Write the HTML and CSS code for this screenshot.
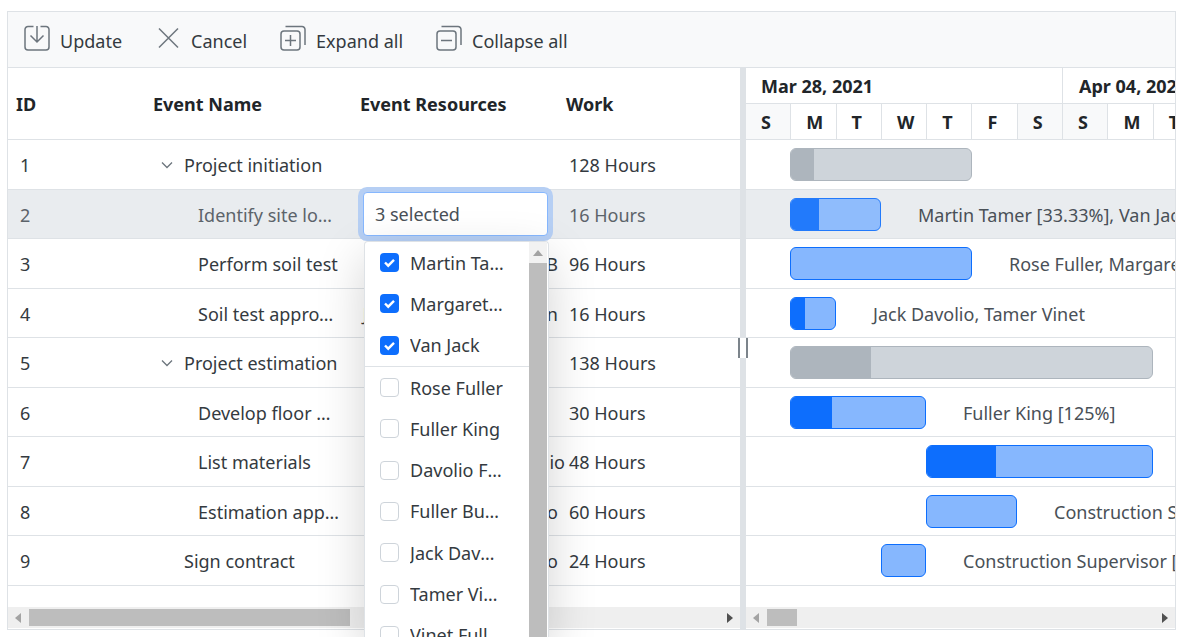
FILE: index.html
```html
<!DOCTYPE html>
<html lang="en">
<head>
  <meta charset="UTF-8" />
  <title>Gantt chart - resource editing</title>
  <link rel="stylesheet" href="styles.css">
</head>
<body>
  <div class="gantt">
    <div class="toolbar">
      <div class="tool">
        <svg class="tool-icon" viewBox="0 0 26 26"><path d="M9.500 1.500H4a3 3 0 0 0-3 3V22a3 3 0 0 0 3 3h18a3 3 0 0 0 3-3V4.500a3 3 0 0 0-3-3h-5.500M13 1v16M6.500 10.500 13 17l6.500-6.500"/></svg>
        <span>Update</span>
      </div>
      <div class="tool">
        <svg class="tool-icon" viewBox="0 0 26 26"><path d="M4 3.500 23 22.500M23 3.500 4 22.500"/></svg>
        <span>Cancel</span>
      </div>
      <div class="tool">
        <svg class="tool-icon" viewBox="0 0 26 26"><rect x="1" y="6" width="19" height="19" rx="3"/><path d="M5.500 1.500H22a3 3 0 0 1 3 3V20M10.500 10v11M5 15.500h11"/></svg>
        <span>Expand all</span>
      </div>
      <div class="tool">
        <svg class="tool-icon" viewBox="0 0 26 26"><rect x="1" y="6" width="19" height="19" rx="3"/><path d="M5.500 1.500H22a3 3 0 0 1 3 3V20M5 15.500h11"/></svg>
        <span>Collapse all</span>
      </div>
    </div>

    <div class="panes">
      <div class="grid">
        <div class="grid-row grid-head">
          <div class="cell">ID</div>
          <div class="cell">Event Name</div>
          <div class="cell">Event Resources</div>
          <div class="cell">Work</div>
        </div>

        <div class="grid-row">
          <div class="cell cell-id">1</div>
          <div class="cell cell-name level-0"><svg class="chevron" viewBox="0 0 14 14"><path d="M2 4.500 7 9.500l5-5"/></svg><span class="name-text">Project initiation</span></div>
          <div class="cell cell-res"></div>
          <div class="cell cell-work">128 Hours</div>
        </div>
        <div class="grid-row is-selected">
          <div class="cell cell-id">2</div>
          <div class="cell cell-name level-1"><span class="name-text">Identify site location</span></div>
          <div class="cell cell-edit"><div class="multi-input">3 selected</div></div>
          <div class="cell cell-work">16 Hours</div>
        </div>
        <div class="grid-row">
          <div class="cell cell-id">3</div>
          <div class="cell cell-name level-1"><span class="name-text">Perform soil test</span></div>
          <div class="cell cell-res">Rose Fuller, Fuller B</div>
          <div class="cell cell-work">96 Hours</div>
        </div>
        <div class="grid-row">
          <div class="cell cell-id">4</div>
          <div class="cell cell-name level-1"><span class="name-text">Soil test approval</span></div>
          <div class="cell cell-res">Jack Davolio, Tamer Vin</div>
          <div class="cell cell-work">16 Hours</div>
        </div>
        <div class="grid-row">
          <div class="cell cell-id">5</div>
          <div class="cell cell-name level-0"><svg class="chevron" viewBox="0 0 14 14"><path d="M2 4.500 7 9.500l5-5"/></svg><span class="name-text">Project estimation</span></div>
          <div class="cell cell-res"></div>
          <div class="cell cell-work">138 Hours</div>
        </div>
        <div class="grid-row">
          <div class="cell cell-id">6</div>
          <div class="cell cell-name level-1"><span class="name-text">Develop floor plan</span></div>
          <div class="cell cell-res"></div>
          <div class="cell cell-work">30 Hours</div>
        </div>
        <div class="grid-row">
          <div class="cell cell-id">7</div>
          <div class="cell cell-name level-1"><span class="name-text">List materials</span></div>
          <div class="cell cell-res res-cut">Fuller King, Davolio</div>
          <div class="cell cell-work">48 Hours</div>
        </div>
        <div class="grid-row">
          <div class="cell cell-id">8</div>
          <div class="cell cell-name level-1"><span class="name-text">Estimation approval</span></div>
          <div class="cell cell-res">Jack Davolio</div>
          <div class="cell cell-work">60 Hours</div>
        </div>
        <div class="grid-row">
          <div class="cell cell-id">9</div>
          <div class="cell cell-name level-0 no-chevron"><span class="name-text">Sign contract</span></div>
          <div class="cell cell-res">Jack Davolio</div>
          <div class="cell cell-work">24 Hours</div>
        </div>

        <div class="hscroll">
          <svg class="arrow arrow-off" viewBox="0 0 6 10"><path d="M6 0v10L0 5z"/></svg>
          <div class="thumb thumb-grid"></div>
          <svg class="arrow arrow-end" viewBox="0 0 6 10"><path d="M0 0v10l6-5z"/></svg>
        </div>
      </div>

      <div class="splitter"><div class="grip"></div></div>

      <div class="chart">
        <div class="weeks">
          <div class="week week-first">Mar 28, 2021</div>
          <div class="week">Apr 04, 2021</div>
        </div>
        <div class="days">
          <div class="day weekend">S</div>
          <div class="day">M</div>
          <div class="day">T</div>
          <div class="day">W</div>
          <div class="day">T</div>
          <div class="day">F</div>
          <div class="day weekend">S</div>
          <div class="day weekend">S</div>
          <div class="day">M</div>
          <div class="day">T</div>
        </div>

        <div class="chart-row">
          <div class="bar bar-parent" style="margin-left: 44px; width: 182px"><div class="progress" style="width: 23px"></div></div>
        </div>
        <div class="chart-row is-selected">
          <div class="bar" style="margin-left: 44px; width: 91px"><div class="progress" style="width: 28px"></div></div>
          <div class="bar-label">Martin Tamer [33.33%], Van Jack, Margaret Buchanan</div>
        </div>
        <div class="chart-row">
          <div class="bar" style="margin-left: 44px; width: 182px"></div>
          <div class="bar-label">Rose Fuller, Margaret Buchanan</div>
        </div>
        <div class="chart-row">
          <div class="bar" style="margin-left: 44px; width: 46px"><div class="progress" style="width: 14px"></div></div>
          <div class="bar-label">Jack Davolio, Tamer Vinet</div>
        </div>
        <div class="chart-row">
          <div class="bar bar-parent" style="margin-left: 44px; width: 363px"><div class="progress" style="width: 80px"></div></div>
        </div>
        <div class="chart-row">
          <div class="bar" style="margin-left: 44px; width: 136px"><div class="progress" style="width: 41px"></div></div>
          <div class="bar-label">Fuller King [125%]</div>
        </div>
        <div class="chart-row">
          <div class="bar" style="margin-left: 180px; width: 227px"><div class="progress" style="width: 69px"></div></div>
        </div>
        <div class="chart-row">
          <div class="bar" style="margin-left: 180px; width: 91px"></div>
          <div class="bar-label">Construction Supervisor</div>
        </div>
        <div class="chart-row">
          <div class="bar" style="margin-left: 135px; width: 45px"></div>
          <div class="bar-label">Construction Supervisor [100%]</div>
        </div>

        <div class="hscroll">
          <svg class="arrow arrow-off" viewBox="0 0 6 10"><path d="M6 0v10L0 5z"/></svg>
          <div class="thumb thumb-chart"></div>
          <svg class="arrow arrow-end" viewBox="0 0 6 10"><path d="M0 0v10l6-5z"/></svg>
        </div>
      </div>
    </div>
  </div>

  <div class="popup">
    <div class="popup-list">
      <div class="option"><span class="check is-on"><svg viewBox="0 0 19 19"><path d="M5 9.500 8.200 12.700 14 6.800"/></svg></span><span class="option-text">Martin Tamer</span></div>
      <div class="option"><span class="check is-on"><svg viewBox="0 0 19 19"><path d="M5 9.500 8.200 12.700 14 6.800"/></svg></span><span class="option-text">Margaret Buchanan</span></div>
      <div class="option"><span class="check is-on"><svg viewBox="0 0 19 19"><path d="M5 9.500 8.200 12.700 14 6.800"/></svg></span><span class="option-text">Van Jack</span></div>
      <div class="divider"></div>
      <div class="option"><span class="check"></span><span class="option-text">Rose Fuller</span></div>
      <div class="option"><span class="check"></span><span class="option-text">Fuller King</span></div>
      <div class="option"><span class="check"></span><span class="option-text">Davolio Fuller</span></div>
      <div class="option"><span class="check"></span><span class="option-text">Fuller Buchanan</span></div>
      <div class="option"><span class="check"></span><span class="option-text">Jack Davolio</span></div>
      <div class="option"><span class="check"></span><span class="option-text">Tamer Vinet</span></div>
      <div class="option"><span class="check"></span><span class="option-text">Vinet Fuller</span></div>
    </div>
    <div class="popup-scroll">
      <svg class="arrow-up" viewBox="0 0 12 7"><path d="M0 7h12L6 0z"/></svg>
      <div class="popup-thumb"></div>
    </div>
  </div>
</body>
</html>
```

FILE: styles.css
```css
html, body {
  height: 100%;
}
body {
  margin: 0;
  overflow: hidden;
  background: #fff;
  color: #212529;
  font-family: 'Noto Sans', 'Open Sans', sans-serif;
  font-size: 18px;
}

.gantt {
  box-sizing: border-box;
  width: 1169px;
  height: 619px;
  margin: 11px 0 0 7px;
  border: 1px solid #dee2e6;
  display: flex;
  flex-direction: column;
}

/* toolbar */
.toolbar {
  box-sizing: border-box;
  flex: none;
  height: 56px;
  padding: 2px 0 0 16px;
  display: flex;
  align-items: center;
  gap: 33px;
  background: #f8f9fa;
  border-bottom: 1px solid #dee2e6;
  color: #343a40;
}
.tool {
  display: flex;
  align-items: center;
  gap: 10px;
}
.tool-icon {
  width: 26px;
  height: 26px;
  margin-top: -5px;
  fill: none;
  stroke: #6c757d;
  stroke-width: 1.5;
}

/* left grid */
.panes {
  flex: 1;
  min-height: 0;
  display: flex;
}
.grid {
  width: 732px;
  flex: none;
  display: flex;
  flex-direction: column;
  overflow: hidden;
}
.grid-row {
  box-sizing: border-box;
  height: 49.5px;
  flex: none;
  display: grid;
  grid-template-columns: 137px 207px 206px 1fr;
  border-bottom: 1px solid #dee2e6;
  color: #343a40;
}
.grid-head {
  height: 72px;
  font-weight: 700;
  color: #212529;
}
.cell {
  min-width: 0;
  display: flex;
  align-items: center;
  padding: 2px 8px 0;
  white-space: nowrap;
  overflow: hidden;
}
.grid-head .cell {
  padding-top: 0;
}
.grid-row.is-selected {
  background: #e9ecef;
  color: #5c636a;
}
.cell-id {
  padding-left: 12px;
}
.cell-work {
  padding-left: 11px;
}
.cell-name {
  padding-right: 12px;
}
.level-0 {
  padding-left: 15px;
}
.no-chevron {
  padding-left: 39px;
}
.level-1 {
  padding-left: 53px;
}
.chevron {
  width: 14px;
  height: 14px;
  flex: none;
  margin-right: 10px;
  fill: none;
  stroke: #6c757d;
  stroke-width: 1.3;
}
.name-text {
  overflow: hidden;
  text-overflow: ellipsis;
}
.cell-res {
  justify-content: flex-end;
  padding-right: 0;
  padding-left: 0;
}
.res-cut {
  margin-right: -7px;
}
.cell-edit {
  padding: 0 0 0 11px;
  overflow: visible;
}
.multi-input {
  box-sizing: border-box;
  width: 185px;
  height: 44px;
  display: flex;
  align-items: center;
  padding: 0 11px;
  background: #fff;
  border: 1px solid #86b7fe;
  border-radius: 4px;
  box-shadow: 0 0 0 5px #b6cff4;
  color: #495057;
}

/* scrollbars */
.hscroll {
  box-sizing: border-box;
  flex: none;
  height: 21px;
  margin-top: auto;
  margin-bottom: 1px;
  padding: 2px 0;
  display: flex;
  align-items: center;
  background: #efefef;
}
.arrow {
  width: 6px;
  height: 10px;
  flex: none;
}
.arrow-off {
  margin-left: 7px;
  fill: #a3a3a3;
}
.arrow-end {
  margin-left: auto;
  margin-right: 7px;
  fill: #505050;
}
.thumb {
  height: 17px;
  background: #bdbdbd;
}
.thumb-grid {
  width: 321px;
  margin-left: 8px;
}
.thumb-chart {
  width: 30px;
  margin-left: 8px;
}

/* splitter */
.splitter {
  position: relative;
  width: 6px;
  flex: none;
  background: #dee2e6;
}
.grip {
  position: absolute;
  top: 270px;
  left: -2px;
  width: 6px;
  height: 20px;
  background: #fff;
  border-left: 2px solid #7c848b;
  border-right: 2px solid #7c848b;
}

/* right chart */
.chart {
  flex: 1;
  min-width: 0;
  display: flex;
  flex-direction: column;
  overflow: hidden;
}
.weeks {
  box-sizing: border-box;
  height: 36px;
  flex: none;
  display: flex;
  border-bottom: 1px solid #dee2e6;
  font-weight: 700;
}
.week {
  flex: none;
  padding: 0 0 0 16px;
  display: flex;
  align-items: center;
  white-space: nowrap;
}
.week-first {
  box-sizing: border-box;
  width: 317px;
  padding-left: 15px;
  border-right: 1px solid #dee2e6;
}
.days {
  box-sizing: border-box;
  height: 36px;
  flex: none;
  display: flex;
  border-bottom: 1px solid #dee2e6;
  font-weight: 700;
}
.day {
  box-sizing: border-box;
  width: 45.3px;
  flex: none;
  display: flex;
  align-items: center;
  padding-left: 15px;
  border-right: 1px solid #dee2e6;
}
.weekend {
  background: #f8f9fa;
}
.chart-row {
  box-sizing: border-box;
  height: 49.5px;
  padding-top: 1px;
  flex: none;
  display: flex;
  align-items: center;
  border-bottom: 1px solid #dee2e6;
  white-space: nowrap;
  overflow: hidden;
}
.chart-row.is-selected {
  background: #e9ecef;
}
.chart-row.is-selected .bar {
  opacity: 0.9;
}
.bar {
  box-sizing: border-box;
  height: 33px;
  flex: none;
  background: #86b7fe;
  border: 1px solid #0d6efd;
  border-radius: 6px;
  overflow: hidden;
}
.progress {
  height: 100%;
  background: #0d6efd;
}
.bar-parent {
  background: #ced4da;
  border-color: #adb5bd;
}
.bar-parent .progress {
  background: #adb5bd;
}
.bar-label {
  flex: none;
  margin-left: 37px;
  padding-top: 1px;
  color: #495057;
}

/* resource dropdown, open over the grid */
.popup {
  position: absolute;
  top: 241px;
  left: 364px;
  box-sizing: border-box;
  width: 185px;
  height: calc(100vh - 241px);
  overflow: hidden;
  display: flex;
  background: #fff;
  border: 1px solid #dee2e6;
  border-bottom: none;
  border-radius: 4px 4px 0 0;
  box-shadow: 0 16px 48px rgba(0, 0, 0, 0.175);
  color: #343a40;
}
.popup-list {
  width: 164px;
  flex: none;
}
.option {
  box-sizing: border-box;
  height: 41.3px;
  display: flex;
  align-items: center;
  gap: 11px;
  padding: 0 24px 0 15px;
}
.option-text {
  min-width: 0;
  white-space: nowrap;
  overflow: hidden;
  text-overflow: ellipsis;
}
.check {
  box-sizing: border-box;
  width: 19px;
  height: 19px;
  flex: none;
  background: #fff;
  border: 1px solid #ced4da;
  border-radius: 4px;
}
.check svg {
  display: block;
  width: 19px;
  height: 19px;
  fill: none;
  stroke: #fff;
  stroke-width: 2.4;
}
.check.is-on {
  background: #0d6efd;
  border: none;
}
.divider {
  height: 1px;
  background: #dee2e6;
}
.popup-scroll {
  width: 18px;
  flex: none;
  display: flex;
  flex-direction: column;
  align-items: center;
  background: #f2f2f2;
}
.arrow-up {
  width: 10px;
  height: 6px;
  margin: 8px 0 7px;
  fill: #a3a3a3;
}
.popup-thumb {
  width: 100%;
  flex: 1;
  background: #bdbdbd;
}
```
